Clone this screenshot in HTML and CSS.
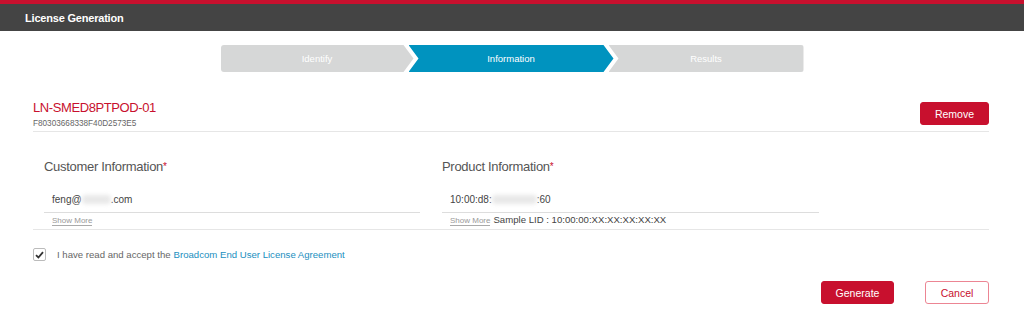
FILE: index.html
```html
<!DOCTYPE html>
<html lang="en">
<head>
  <meta charset="UTF-8">
  <meta name="viewport" content="width=device-width, initial-scale=1.0">
  <title>License Generation</title>
  <link rel="stylesheet" href="styles.css">
</head>
<body>
  <header class="topbar">
    <h1>License Generation</h1>
  </header>

  <div class="steps">
    <div class="step step-first">Identify</div>
    <div class="step step-mid active">Information</div>
    <div class="step step-last">Results</div>
  </div>

  <div class="container">
    <div class="item-head">
      <div class="item-title">
        <div class="item-name">LN-SMED8PTPOD-01</div>
        <div class="item-id">F80303668338F40D2573E5</div>
      </div>
      <button class="btn btn-red btn-remove">Remove</button>
    </div>

    <div class="info">
      <div class="info-col">
        <h2>Customer Information<span class="req">*</span></h2>
        <div class="field">feng@<span class="blur blur-mail"></span>.com</div>
        <div class="more"><a class="show-more">Show More</a></div>
      </div>
      <div class="info-col">
        <h2>Product Information<span class="req">*</span></h2>
        <div class="field">10:00:d8:<span class="blur blur-lid"></span>:60</div>
        <div class="more"><a class="show-more">Show More</a> <span class="sample">Sample LID : 10:00:00:XX:XX:XX:XX:XX</span></div>
      </div>
    </div>

    <label class="agree">
      <span class="checkbox">
        <svg width="9" height="8" viewBox="0 0 9 8"><path d="M1 4.2 L3.4 6.5 L8 1.2" fill="none" stroke="#333" stroke-width="1.8"/></svg>
      </span>
      I have read and accept the <a class="link">Broadcom End User License Agreement</a>
    </label>

    <div class="actions">
      <button class="btn btn-red btn-generate">Generate</button>
      <button class="btn btn-outline">Cancel</button>
    </div>
  </div>
</body>
</html>
```

FILE: styles.css
```css
* {
  margin: 0;
  padding: 0;
  box-sizing: border-box;
}

body {
  font-family: "Liberation Sans", Arial, sans-serif;
  background-color: #fff;
  color: #555;
}

.topbar {
  height: 31px;
  border-top: 4px solid #c8102e;
  background-color: #444;
  padding-left: 25px;
  display: flex;
  align-items: center;
}

.topbar h1 {
  font-size: 11px;
  font-weight: bold;
  color: #fff;
  letter-spacing: -0.2px;
}

.steps {
  display: flex;
  justify-content: center;
  margin-top: 14px;
  height: 27px;
}

.step {
  height: 27px;
  display: flex;
  align-items: center;
  justify-content: center;
  background-color: #d6d7d7;
  color: #fff;
  font-size: 9.5px;
}

.step.active {
  background-color: #0093bf;
}

.step-first {
  width: 193px;
  border-radius: 3px 0 0 3px;
  clip-path: polygon(0 0, calc(100% - 10px) 0, 100% 50%, calc(100% - 10px) 100%, 0 100%);
}

.step-mid {
  width: 205px;
  margin-left: -5px;
  clip-path: polygon(0 0, calc(100% - 10px) 0, 100% 50%, calc(100% - 10px) 100%, 0 100%, 10px 50%);
}

.step-last {
  width: 195px;
  margin-left: -5px;
  border-radius: 0 3px 3px 0;
  clip-path: polygon(0 0, 100% 0, 100% 100%, 0 100%, 10px 50%);
}

.container {
  padding: 0 35px 0 33px;
}

.item-head {
  display: flex;
  justify-content: space-between;
  align-items: flex-start;
  margin-top: 28px;
  padding-bottom: 2px;
  border-bottom: 1px solid #e6e6e6;
}

.item-name {
  font-size: 13px;
  line-height: 16px;
  letter-spacing: -0.4px;
  color: #c8102e;
}

.item-id {
  margin-top: 3px;
  font-size: 8.2px;
  line-height: 10px;
  color: #666;
}

.btn {
  font-family: inherit;
  font-size: 10.5px;
  height: 23px;
  border-radius: 3px;
  cursor: pointer;
}

.btn-red {
  background-color: #c8102e;
  border: 1px solid #c8102e;
  color: #fff;
}

.btn-remove {
  width: 69px;
  margin-top: 2px;
}

.info {
  display: grid;
  grid-template-columns: 376px 377px;
  column-gap: 22px;
  padding: 27px 0 3px 11px;
  border-bottom: 1px solid #e6e6e6;
}

.info h2 {
  font-size: 13px;
  font-weight: normal;
  line-height: 16px;
  letter-spacing: -0.3px;
  color: #555;
}

.req {
  color: #c8102e;
  font-size: 10px;
  vertical-align: top;
}

.field {
  margin-top: 12px;
  padding: 6px 8px 5px;
  font-size: 10px;
  line-height: 14px;
  color: #444;
  border-bottom: 1px solid #ddd;
}

.blur {
  display: inline-block;
  height: 9px;
  vertical-align: -1px;
  background-color: #e8e8e8;
  filter: blur(2px);
  border-radius: 4px;
}

.blur-mail {
  width: 29px;
}

.blur-lid {
  width: 45px;
}

.more {
  margin-top: 3px;
  padding-left: 8px;
  height: 10px;
  display: flex;
  align-items: flex-start;
  gap: 3px;
}

.show-more {
  font-size: 8px;
  line-height: 9px;
  color: #999;
  border-bottom: 1px solid #aaa;
}

.sample {
  font-size: 9.6px;
  line-height: 10px;
  margin-top: -1px;
  color: #444;
}

.agree {
  display: flex;
  align-items: center;
  margin-top: 18px;
  font-size: 9.6px;
  color: #666;
}

.checkbox {
  width: 13px;
  height: 13px;
  border: 1px solid #bbb;
  border-radius: 2px;
  margin-right: 11px;
  display: flex;
  align-items: center;
  justify-content: center;
}

.link {
  color: #1a8fc0;
  margin-left: 3px;
}

.actions {
  display: flex;
  justify-content: flex-end;
  gap: 31px;
  margin-top: 20px;
}

.btn-generate {
  width: 73px;
}

.btn-outline {
  width: 64px;
  background-color: #fff;
  border: 1px solid #ec8593;
  color: #c8102e;
}
```
